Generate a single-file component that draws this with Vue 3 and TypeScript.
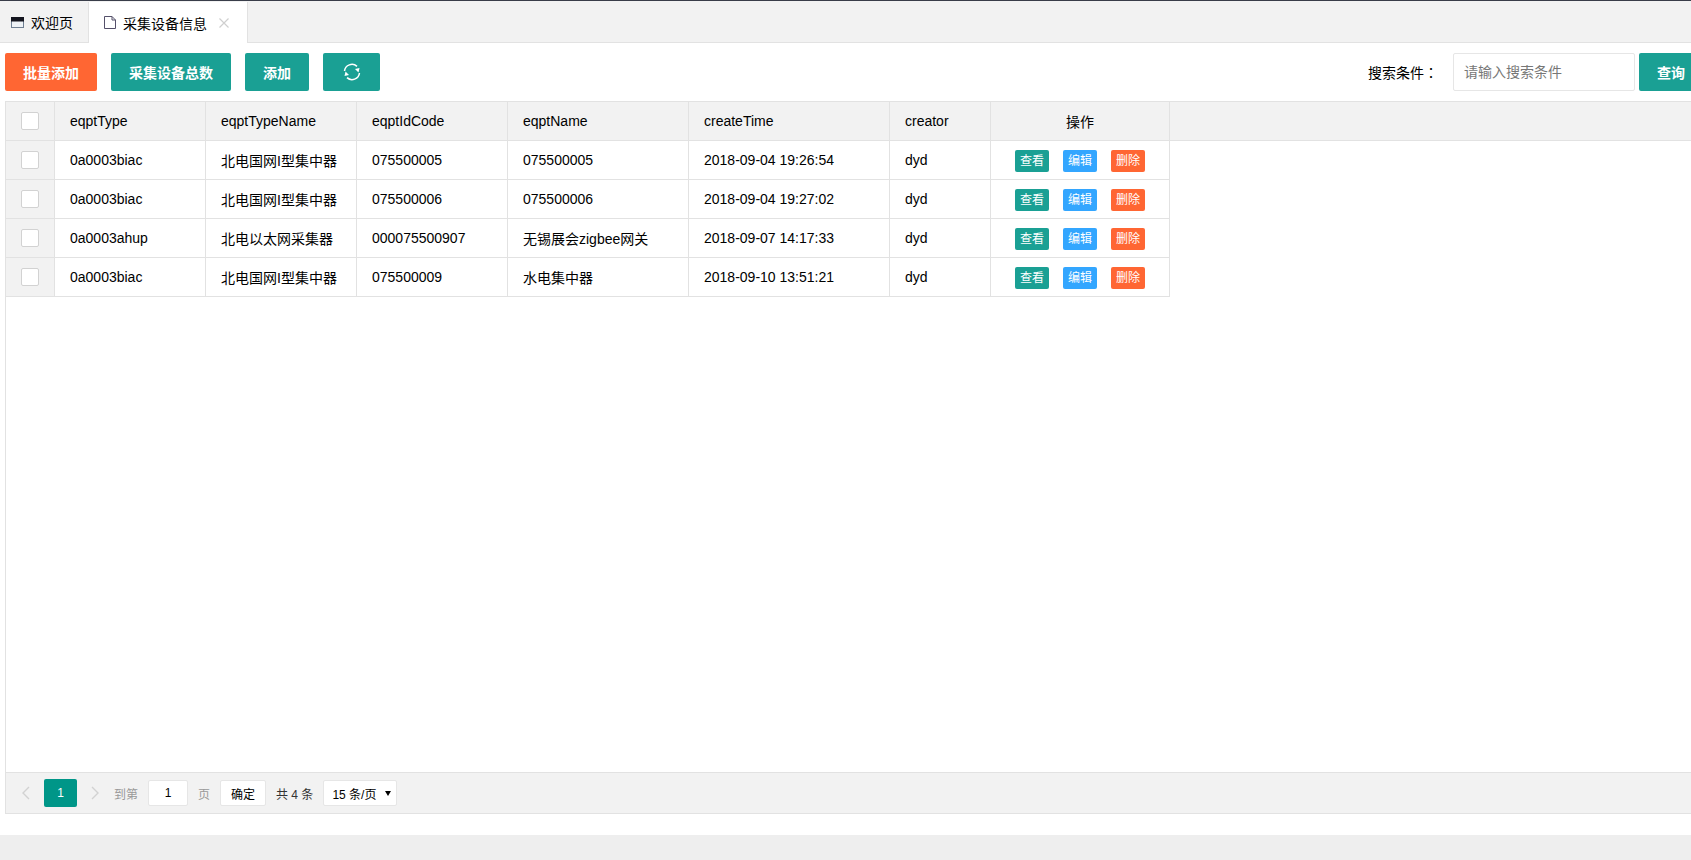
<script setup lang="ts">
interface Device {
  eqptType: string
  eqptTypeName: string
  eqptIdCode: string
  eqptName: string
  createTime: string
  creator: string
}

const columns = ['eqptType', 'eqptTypeName', 'eqptIdCode', 'eqptName', 'createTime', 'creator'] as const

const rows: Device[] = [
  { eqptType: '0a0003biac', eqptTypeName: '北电国网I型集中器', eqptIdCode: '075500005', eqptName: '075500005', createTime: '2018-09-04 19:26:54', creator: 'dyd' },
  { eqptType: '0a0003biac', eqptTypeName: '北电国网I型集中器', eqptIdCode: '075500006', eqptName: '075500006', createTime: '2018-09-04 19:27:02', creator: 'dyd' },
  { eqptType: '0a0003ahup', eqptTypeName: '北电以太网采集器', eqptIdCode: '000075500907', eqptName: '无锡展会zigbee网关', createTime: '2018-09-07 14:17:33', creator: 'dyd' },
  { eqptType: '0a0003biac', eqptTypeName: '北电国网I型集中器', eqptIdCode: '075500009', eqptName: '水电集中器', createTime: '2018-09-10 13:51:21', creator: 'dyd' },
]
</script>

<template>
  <div class="page">
    <div class="tabs">
      <div class="tab">
        <svg class="tab-icon" width="13" height="11" viewBox="0 0 13 11">
          <rect x="0.5" y="0.5" width="12" height="10" fill="#eef2f6" stroke="#6f7f92" />
          <rect x="0" y="0" width="13" height="4.5" fill="#14151f" />
        </svg>
        <span>欢迎页</span>
      </div>
      <div class="tab active">
        <svg class="tab-icon" width="12" height="13" viewBox="0 0 12 13">
          <path d="M.5.5h7.5l3.5 3.5v8.5H.5z" fill="#fff" stroke="#55506a" />
          <path d="M8 .5V4h3.5" fill="none" stroke="#55506a" />
        </svg>
        <span>采集设备信息</span>
        <svg class="tab-close" width="10" height="10" viewBox="0 0 10 10">
          <path d="M.5.5l9 9M9.5.5l-9 9" stroke="#cfcfcf" stroke-width="1.2" fill="none" />
        </svg>
      </div>
    </div>

    <div class="toolbar">
      <button class="btn orange">批量添加</button>
      <button class="btn teal">采集设备总数</button>
      <button class="btn teal">添加</button>
      <button class="btn teal refresh">
        <svg width="18" height="18" viewBox="0 0 18 18" fill="none" stroke="#fff" stroke-width="1.5">
          <path d="M1.5 8A7.5 7.5 0 0 1 14 3.4" />
          <path d="M16.5 10A7.5 7.5 0 0 1 4 14.6" />
          <path d="M16.5 5l-1 4.5L12 6z" fill="#fff" stroke="none" />
          <path d="M1.5 13l1-4.5L6 12z" fill="#fff" stroke="none" />
        </svg>
      </button>
      <div class="search">
        <label>搜索条件：</label>
        <input class="search-input" type="text" placeholder="请输入搜索条件" />
        <button class="btn teal query">查询</button>
      </div>
    </div>

    <div class="grid">
      <div class="grid-head">
        <table>
          <colgroup>
            <col class="c-check" />
            <col class="c-150" />
            <col class="c-150" />
            <col class="c-150" />
            <col class="c-180" />
            <col class="c-200" />
            <col class="c-100" />
            <col class="c-ops" />
          </colgroup>
          <tr>
            <th class="center"><span class="checkbox"></span></th>
            <th v-for="c in columns" :key="c">{{ c }}</th>
            <th class="center">操作</th>
          </tr>
        </table>
      </div>
      <div class="grid-body">
        <table>
          <colgroup>
            <col class="c-check" />
            <col class="c-150" />
            <col class="c-150" />
            <col class="c-150" />
            <col class="c-180" />
            <col class="c-200" />
            <col class="c-100" />
            <col class="c-ops" />
          </colgroup>
          <tr v-for="(row, i) in rows" :key="i">
            <td class="center check-cell"><span class="checkbox"></span></td>
            <td v-for="c in columns" :key="c">{{ row[c] }}</td>
            <td class="center">
              <span class="mini teal">查看</span>
              <span class="mini blue">编辑</span>
              <span class="mini orange">删除</span>
            </td>
          </tr>
        </table>
      </div>
      <div class="pager">
        <svg class="arrow" width="10" height="14" viewBox="0 0 10 14"><path d="M8 1L2 7l6 6" fill="none" stroke="#d2d2d2" stroke-width="1.4" /></svg>
        <span class="page-num">1</span>
        <svg class="arrow next" width="10" height="14" viewBox="0 0 10 14"><path d="M2 1l6 6-6 6" fill="none" stroke="#d2d2d2" stroke-width="1.4" /></svg>
        <span class="muted goto">到第</span>
        <input class="page-input" type="text" value="1" />
        <span class="muted unit">页</span>
        <button class="confirm">确定</button>
        <span class="total">共 4 条</span>
        <div class="limit">
          <span>15 条/页</span>
          <i class="caret"></i>
        </div>
      </div>
    </div>

    <div class="footer"></div>
  </div>
</template>

<style>
html, body {
  margin: 0;
  overflow: hidden;
}
</style>

<style scoped>
.page {
  width: 1691px;
  height: 860px;
  overflow: hidden;
  display: flex;
  flex-direction: column;
  background: #fff;
  color: #000;
  font: 14px "Liberation Sans", "Noto Sans CJK SC", sans-serif;
  border-top: 1px solid #393d49;
  box-sizing: border-box;
}
.tabs {
  height: 42px;
  flex: none;
  box-sizing: border-box;
  display: flex;
  background: #f2f2f2;
  border-bottom: 1px solid #e2e2e2;
  padding-top: 1px;
}
.tab {
  height: 40px;
  display: flex;
  align-items: center;
  gap: 7px;
  padding: 0 11px;
  width: 88px;
  box-sizing: border-box;
}
.tab.active {
  width: 160px;
  height: 41px;
  background: #fff;
  border-left: 1px solid #e2e2e2;
  border-right: 1px solid #e2e2e2;
  padding-left: 15px;
}
.tab-close {
  margin-left: 5px;
}
.toolbar {
  flex: none;
  display: flex;
  align-items: flex-start;
  gap: 14px;
  padding: 10px 0 0 5px;
  height: 58px;
  width: 1703px;
  box-sizing: border-box;
}
.btn {
  flex: none;
  height: 38px;
  border: 0;
  border-radius: 2px;
  color: #fff;
  font: bold 14px "Liberation Sans", "Noto Sans CJK SC", sans-serif;
  padding: 0 18px;
  display: flex;
  align-items: center;
  justify-content: center;
}
.orange {
  background: #ff6633;
}
.teal {
  background: #1aa094;
}
.blue {
  background: #33a6ff;
}
.refresh {
  width: 57px;
}
.search {
  margin-left: auto;
  display: flex;
  align-items: center;
}
.search label {
  width: 85px;
  font-family: "Liberation Sans", "Noto Sans CJK TC", sans-serif;
}
.search-input {
  width: 182px;
  height: 38px;
  box-sizing: border-box;
  border: 1px solid #e6e6e6;
  border-radius: 2px;
  padding: 0 10px;
  font: 14px "Liberation Sans", "Noto Sans CJK SC", sans-serif;
  outline: none;
  margin-right: 4px;
}
.search-input::placeholder {
  color: #777;
}
.query {
  width: 64px;
  padding: 0;
}
.grid {
  flex: none;
  height: 713px;
  width: 1720px;
  margin-left: 5px;
  box-sizing: border-box;
  border: 1px solid #e2e2e2;
  display: flex;
  flex-direction: column;
}
.grid-head {
  flex: none;
  height: 39px;
  box-sizing: border-box;
  background: #f2f2f2;
  border-bottom: 1px solid #e2e2e2;
}
.grid-body {
  flex: 1;
}
table {
  table-layout: fixed;
  width: 1164px;
  border-collapse: separate;
  border-spacing: 0;
}
.c-check { width: 49px; }
.c-150 { width: 151px; }
.c-180 { width: 181px; }
.c-200 { width: 201px; }
.c-100 { width: 101px; }
.c-ops { width: 179px; }
th, td {
  height: 38px;
  padding: 0 15px;
  box-sizing: border-box;
  text-align: left;
  font-weight: normal;
  font-size: 14px;
  border-right: 1px solid #e2e2e2;
  white-space: nowrap;
}
td {
  height: 39px;
  border-bottom: 1px solid #e2e2e2;
}
.center {
  text-align: center;
  padding: 0;
}
.check-cell {
  background: #f2f2f2;
}
.checkbox {
  display: inline-block;
  width: 18px;
  height: 18px;
  box-sizing: border-box;
  background: #fff;
  border: 1px solid #d2d2d2;
  border-radius: 2px;
  vertical-align: middle;
}
.mini {
  display: inline-block;
  width: 34px;
  height: 22px;
  line-height: 22px;
  border-radius: 2px;
  color: #fff;
  font-size: 12px;
  margin: 2px 7px 0;
  vertical-align: middle;
  text-align: center;
}
.pager {
  flex: none;
  height: 41px;
  box-sizing: border-box;
  background: #f2f2f2;
  border-top: 1px solid #e2e2e2;
  display: flex;
  align-items: center;
  padding-left: 15px;
  font-size: 12px;
}
.page-num {
  width: 33px;
  height: 28px;
  margin-left: 13px;
  line-height: 28px;
  text-align: center;
  background: #009688;
  color: #fff;
  border-radius: 2px;
}
.arrow.next {
  margin-left: 13px;
}
.muted {
  color: #999;
}
.goto {
  margin-left: 14px;
}
.page-input {
  width: 40px;
  height: 26px;
  box-sizing: border-box;
  border: 1px solid #e6e6e6;
  border-radius: 2px;
  text-align: center;
  margin-left: 10px;
  font: 12px "Liberation Sans", sans-serif;
  color: #000;
  padding: 0;
  outline: none;
}
.unit {
  margin-left: 10px;
}
.confirm {
  width: 46px;
  height: 26px;
  margin-left: 10px;
  padding: 0;
  background: #fff;
  border: 1px solid #e6e6e6;
  border-radius: 2px;
  font: 12px "Liberation Sans", "Noto Sans CJK SC", sans-serif;
}
.total {
  margin-left: 10px;
  color: #333;
}
.limit {
  width: 74px;
  height: 26px;
  box-sizing: border-box;
  margin-left: 10px;
  padding: 0 5px 0 8px;
  background: #fff;
  border: 1px solid #e6e6e6;
  border-radius: 2px;
  display: flex;
  align-items: center;
  justify-content: space-between;
}
.caret {
  width: 0;
  height: 0;
  border-left: 3px solid transparent;
  border-right: 3px solid transparent;
  border-top: 5px solid #000;
}
.footer {
  margin-top: 21px;
  flex: 1;
  background: #eee;
}
</style>
